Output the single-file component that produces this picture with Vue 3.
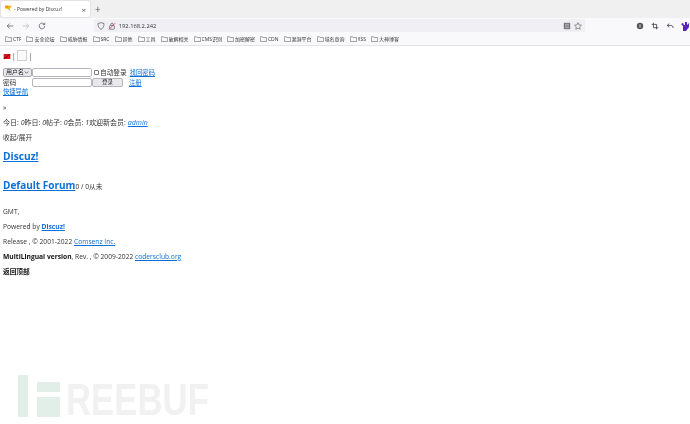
<script setup>
const bookmarks = ['CTF','安全论坛','威胁情报','SRC','其他','工具','破解相关','CMS识别','加密解密','CDN','漏洞平台','域名查询','XSS','大神博客']
</script>

<template>
  <div class="screen">
    <div class="browser">
      <header class="tabbar">
        <div class="tab">
          <svg class="favicon" viewBox="0 0 10 10" width="8" height="8"><path d="M0 1h9L6 4l1 4-3-3-4-1z" fill="#f7b500"/><path d="M0 1h5L2 4z" fill="#f08a00"/></svg>
          <span class="tab-title">- Powered by Discuz!</span>
          <span class="tab-close">×</span>
        </div>
        <span class="new-tab">+</span>
      </header>
      <div class="toolbar">
        <div class="nav-icons">
          <svg viewBox="0 0 10 10" width="8" height="8"><path d="M9 5H1.500M4.500 2 1.500 5l3 3" fill="none" stroke="#5b5b66" stroke-width="1"/></svg>
          <svg viewBox="0 0 10 10" width="8" height="8"><path d="M1 5h7.500M5.500 2l3 3-3 3" fill="none" stroke="#b9b9c0" stroke-width="1"/></svg>
          <svg viewBox="0 0 10 10" width="8" height="8"><path d="M8.500 5A3.500 3.500 0 1 1 7.400 2.400M8.500 .8v2.500H6" fill="none" stroke="#5b5b66" stroke-width="1"/></svg>
        </div>
        <div class="urlbar">
          <svg viewBox="0 0 10 10" width="8" height="8"><path d="M5 .8 8.800 2c0 3.500-1.200 6-3.800 7.200C2.400 8 1.200 5.500 1.200 2z" fill="none" stroke="#5b5b66" stroke-width=".9"/></svg>
          <svg viewBox="0 0 10 10" width="8" height="8"><rect x="2" y="4.500" width="6" height="4.500" rx=".8" fill="none" stroke="#5b5b66" stroke-width=".9"/><path d="M3.500 4.500V3a1.500 1.500 0 0 1 3 0v1.500" fill="none" stroke="#5b5b66" stroke-width=".9"/><path d="M1 9.500 9 1.500" stroke="#d7264a" stroke-width=".9"/></svg>
          <span class="url">192.168.2.242</span>
          <span class="spacer"></span>
          <svg viewBox="0 0 10 10" width="8" height="8"><rect x="1" y="1" width="8" height="8" fill="#77777f"/><path d="M2.500 3h5M2.500 5h5M2.500 7h5" stroke="#d8d8dc" stroke-width=".7"/></svg>
          <svg viewBox="0 0 10 10" width="8" height="8"><path d="m5 .8 1.300 2.800 3 .4-2.200 2.100.6 3L5 7.600 2.300 9.100l.6-3L.7 4l3-.4z" fill="none" stroke="#5b5b66" stroke-width=".8"/></svg>
        </div>
        <div class="ext-icons">
          <svg viewBox="0 0 10 10" width="8" height="8"><circle cx="5" cy="5" r="4" fill="#55555d"/><path d="M5 3v4" stroke="#fff" stroke-width="1"/></svg>
          <svg viewBox="0 0 10 10" width="8" height="8"><path d="M3 .8V7.200h6.200M.8 3H7v6.200" fill="none" stroke="#4b4b53" stroke-width="1.100"/></svg>
          <svg viewBox="0 0 10 10" width="8" height="8"><path d="M4 2 1.500 4.300 4 6.600M1.500 4.300H6c2 0 2.800 1.300 2.800 3.200" fill="none" stroke="#4b4b53" stroke-width="1.100"/></svg>
          <svg class="ext-last" viewBox="0 0 10 10" width="10" height="10"><path d="M3 10V5L1 3l2-1 1 2h1V1h2v3l2-2v4L6 10z" fill="#5a22b8"/></svg>
        </div>
      </div>
      <nav class="bookmarks">
        <span v-for="b in bookmarks" :key="b" class="bookmark">
          <svg viewBox="0 0 10 8" width="7" height="6"><path d="M.5 1.500V7.500h9V2H4.500L3.500.8H.5z" fill="none" stroke="#55555d" stroke-width=".8"/></svg>
          <span class="bookmark-label">{{ b }}</span>
        </span>
      </nav>
    </div>

    <main class="page">
      <div class="lang-row">
        <svg class="flag" viewBox="0 0 8 6" width="8" height="5"><rect width="8" height="6" fill="#d9141e"/><path d="M0 6 8 0" stroke="#600" stroke-width="1"/></svg>
        <span class="pipe">|</span>
        <span class="broken-img"></span>
        <span class="pipe">|</span>
      </div>

      <div class="login">
        <div class="login-row">
          <span class="select-wrap">
            <select class="field-select"><option>用户名</option></select>
            <svg class="chevron" viewBox="0 0 6 4" width="5" height="3"><path d="M.7.7 3 3 5.300.7" fill="none" stroke="#333" stroke-width=".9"/></svg>
          </span>
          <input class="field" />
          <label class="auto"><input class="check" type="checkbox" />自动登录</label>
          <a class="link small" href="#">找回密码</a>
        </div>
        <div class="login-row">
          <span class="pw-label">密码</span>
          <input class="field" />
          <button class="submit">登录</button>
          <a class="link small reg" href="#">注册</a>
        </div>
      </div>
      <a class="link small quick" href="#">快捷导航</a>
      <p class="raquo">»</p>
      <p class="stats">今日: <em>0</em>昨日: <em>0</em>帖子: <em>0</em>会员: <em>1</em>欢迎新会员: <a class="link" href="#"><em>admin</em></a></p>
      <p class="toggle">收起/展开</p>
      <h2 class="cat"><a class="link" href="#">Discuz!</a></h2>
      <h2 class="forum"><a class="link" href="#">Default Forum</a><span class="counts">0 / 0从未</span></h2>
      <p class="foot first">GMT,</p>
      <p class="foot">Powered by <a class="link" href="#"><strong>Discuz!</strong></a></p>
      <p class="foot">Release , © 2001-2022 <a class="link" href="#">Comsenz Inc.</a></p>
      <p class="foot"><strong class="black">MultiLingual version</strong>, Rev. , © 2009-2022 <a class="link" href="#">codersclub.org</a></p>
      <p class="foot"><strong class="black">返回顶部</strong></p>
    </main>

    <div class="watermark" aria-hidden="true">
      <span class="mark-bar"></span>
      <span class="mark-f"><i></i><i></i></span>
      <span class="mark-text">REEBUF</span>
    </div>
  </div>
</template>

<style scoped>
.screen {
  position: relative;
  width: 690px;
  height: 424px;
  overflow: hidden;
  background: #fff;
  color: #333;
  font-family: "Open Sans", "Noto Sans CJK SC", sans-serif;
  font-size: 6.7px;
}
.browser { filter: blur(.3px); }
.tabbar {
  height: 18px;
  background: #f0f0f1;
  display: flex;
  align-items: center;
  padding-left: 1px;
}
.tab {
  width: 89px;
  height: 16px;
  background: #fff;
  border-radius: 2px;
  display: flex;
  align-items: center;
  padding: 0 4px;
  box-sizing: border-box;
  box-shadow: 0 0 2px rgba(0,0,0,.2);
}
.tab-title { margin-left: 1px; font-size: 5px; flex: 1; color: #333; }
.tab-close { font-size: 8px; color: #555; }
.new-tab { margin-left: 5px; font-size: 10px; color: #555; }
.toolbar {
  height: 15px;
  background: #f9f9fb;
  display: flex;
  align-items: center;
}
.nav-icons { display: flex; gap: 8px; padding-left: 6px; width: 94px; box-sizing: border-box; }
.urlbar {
  width: 493px;
  height: 13px;
  background: #f0f0f4;
  border-radius: 2px;
  display: flex;
  align-items: center;
  gap: 3px;
  padding: 0 3px;
  box-sizing: border-box;
}
.url { font-size: 5.8px; color: #333; }
.spacer { flex: 1; }
.ext-icons { display: flex; gap: 7px; align-items: center; margin-left: 51px; }
.ext-last { margin-left: -1px; }
.bookmarks {
  height: 12px;
  background: #f9f9fb;
  border-bottom: 1px solid #e4e4e8;
  display: flex;
  align-items: center;
  gap: 5px;
  padding-left: 5px;
  font-size: 5px;
  line-height: 8px;
  color: #333;
}
.bookmark { display: flex; align-items: center; gap: 1px; white-space: nowrap; height: 8px; }
.bookmark-label { display: block; height: 8px; line-height: 8px; overflow: hidden; }
.page { padding: 0 3px; filter: blur(.25px); }
p, h2 { margin: 0; }
.link { color: #0d6fd9; text-decoration: underline; }
.lang-row { display: flex; align-items: center; height: 20px; gap: 1px; }
.flag { display: block; }
.pipe { color: #444; }
.broken-img { width: 10px; height: 11px; margin: 0 1px 2px 0; border: 1px solid #cfcfcf; box-sizing: border-box; background: #fafafa; }
.login { margin-top: 1px; }
.login-row { display: flex; align-items: center; height: 10px; white-space: nowrap; }
.select-wrap { position: relative; display: block; width: 29px; height: 9px; }
.field-select {
  display: block; width: 29px; height: 9px; padding: 0 0 0 2px; font: inherit; font-size: 6px; line-height: 7px;
  border: 1px solid #a9a9b3; border-radius: 2px; background: #e9e9ed; color: #222;
  appearance: none; box-sizing: border-box;
}
.chevron { position: absolute; right: 3px; top: 3px; }
.field {
  width: 60px; height: 9px; padding: 0; box-sizing: border-box;
  border: 1px solid #b5b5bd; border-radius: 2px; background: #fff;
}
.auto { display: flex; align-items: center; margin-left: 2px; color: #333; }
.check {
  width: 5px; height: 5px; margin: 0 1px 0 0; appearance: none;
  border: 1px solid #77777f; border-radius: 1px; box-sizing: border-box; background: #fff;
}
.small { font-size: 6.3px; }
.login-row > .link { margin-left: 3px; }
.pw-label { width: 29px; }
.submit {
  width: 31px; height: 9px; padding: 0; font: inherit; font-size: 5.5px; line-height: 7px;
  border: 1px solid #b5b5bd; border-radius: 2px; background: #e9e9ed; color: #222;
}
.login-row > .reg { margin-left: 6px; }
.quick { display: block; line-height: 9px; }
.raquo { margin-top: 6px; line-height: 12px; }
.stats { margin-top: 3px; line-height: 12px; font-size: 7px; }
.toggle { margin-top: 3px; line-height: 12px; }
.cat { margin-top: 4px; font-size: 10.2px; line-height: 16px; }
.forum { margin-top: 13px; font-size: 10px; line-height: 16px; }
.counts { font-size: 6.7px; font-weight: 400; color: #333; }
.foot { line-height: 12px; margin-top: 3px; }
.first { margin-top: 11px; }
.black { color: #111; }
.watermark {
  position: absolute;
  left: 18px;
  top: 375px;
  height: 42px;
  display: flex;
}
.mark-bar { width: 10px; height: 42px; background: #e2efe8; }
.mark-f { width: 23px; margin: 7px 0 0 9px; display: flex; flex-direction: column; gap: 5px; }
.mark-f i { display: block; background: #e2efe8; }
.mark-f i:first-child { height: 10px; }
.mark-f i:last-child { flex: 1; }
.mark-text {
  position: absolute;
  left: 48px;
  top: 3px;
  font: 700 44px/44px "Liberation Sans", sans-serif;
  color: #f1f1f1;
  transform: scaleX(.79);
  transform-origin: left top;
}
</style>
